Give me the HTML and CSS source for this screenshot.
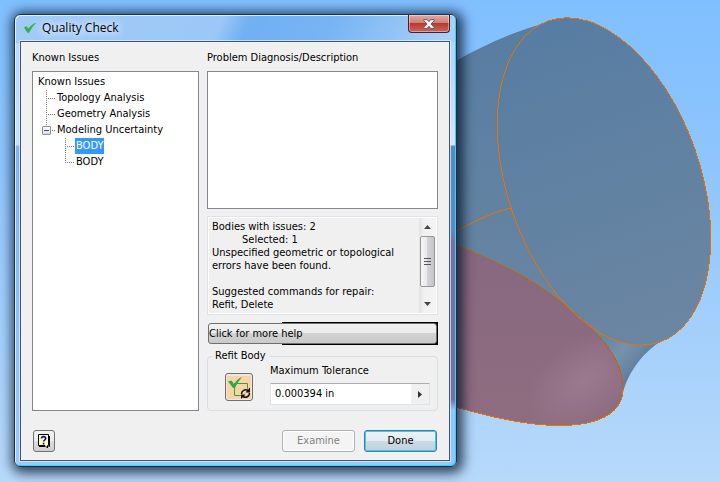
FILE: index.html
```html
<!DOCTYPE html>
<html lang="en">
<head>
	<meta charset="UTF-8">
	<title>Quality Check</title>
	<link rel="stylesheet" href="styles.css">
</head>
<body>
	<svg class="scene" viewBox="0 0 720 482" preserveAspectRatio="xMinYMin slice" aria-hidden="true">
		<defs>
			<linearGradient id="steel" gradientUnits="userSpaceOnUse" x1="0" y1="17" x2="0" y2="345">
				<stop offset="0" stop-color="#577da2"/>
				<stop offset="1" stop-color="#6b86a2"/>
			</linearGradient>
			<linearGradient id="neck" gradientUnits="userSpaceOnUse" x1="600" y1="345" x2="632" y2="372">
				<stop offset="0" stop-color="#6787a4"/>
				<stop offset="0.5" stop-color="#7592ad"/>
				<stop offset="1" stop-color="#647f9b"/>
			</linearGradient>
			<linearGradient id="plum" gradientUnits="userSpaceOnUse" x1="0" y1="245" x2="0" y2="425">
				<stop offset="0" stop-color="#876880"/>
				<stop offset="1" stop-color="#8f6d80"/>
			</linearGradient>
			<radialGradient id="shine" gradientUnits="userSpaceOnUse" cx="0" cy="0" r="66" gradientTransform="translate(585 380) rotate(-35) scale(1 .6)">
				<stop offset="0" stop-color="#9b7a90"/>
				<stop offset="1" stop-color="#9b7a90" stop-opacity="0"/>
			</radialGradient>
			<linearGradient id="ellipse-steel" gradientUnits="userSpaceOnUse" x1="434" y1="181" x2="774" y2="181">
				<stop offset="0" stop-color="#577da2"/>
				<stop offset="1" stop-color="#6b86a2"/>
			</linearGradient>
		</defs>
		<path fill="url(#steel)" d="M380 100 L456 61 C482 46 510 33 545 23 L604 180 L585 318 L560 310 L380 260 Z"/>
		<path fill="url(#neck)" d="M545 280 L600 330 L663 340 C644 351 628 372 623 393 L610 350 L560 308 Z"/>
		<ellipse fill="url(#ellipse-steel)" cx="604" cy="181.5" rx="170" ry="96.5" transform="rotate(70.9 604 181.5)"/>
		<path fill="url(#plum)" d="M380 220 L456 245 C503 264 536 281 566 306 C598 332 623 357 623 389 C623 411 602 425 562 425.5 C527 426 490 417 456 407 L380 390 Z"/>
		<path fill="url(#shine)" d="M380 220 L456 245 C503 264 536 281 566 306 C598 332 623 357 623 389 C623 411 602 425 562 425.5 C527 426 490 417 456 407 L380 390 Z"/>
		<g fill="none" stroke="#e67300" stroke-width="1" shape-rendering="crispEdges">
			<path d="M430 247 C458 229 486 214 511 208"/>
			<path stroke="#bd650e" d="M456 245 C503 264 536 281 566 306 C598 332 623 357 623 389"/>
			<path d="M623 389 C623 411 602 425 562 425.5 C527 426 490 417 456 407"/>
			<ellipse cx="604" cy="181.5" rx="170" ry="96.5" transform="rotate(70.9 604 181.5)"/>
		</g>
	</svg>

	<main class="dialog">
		<header class="titlebar">
			<svg class="title-icon" viewBox="0 0 12 10" aria-hidden="true"><path fill="#36ae49" stroke="#36ae49" stroke-width=".5" d="M.3 4.5 L2.5 3.5 L4.3 6 C6 3.5 8.5 1.2 11.7 .3 C9 2.5 7 5.5 5 9.6 L3.5 9.6 Z"/></svg>
			<h1 class="title">Quality Check</h1>
			<button class="close" aria-label="Close">
				<svg viewBox="0 0 12 10" aria-hidden="true"><path fill="#f5f5f5" stroke="#5c5c66" stroke-width="1" d="M.8 .6 H4.2 L6 2.7 L7.8 .6 H11.2 V1.6 L8 5 L11.2 8.4 V9.4 H7.8 L6 7.3 L4.2 9.4 H.8 V8.4 L4 5 L.8 1.6 Z"/></svg>
			</button>
		</header>
		<div class="client">
			<div class="columns">
				<section class="column">
					<h2 class="label">Known Issues</h2>
					<div class="box tree">
						<div class="row"><span class="node">Known Issues</span></div>
						<ul>
							<li><div class="row"><span class="node">Topology Analysis</span></div></li>
							<li><div class="row"><span class="node">Geometry Analysis</span></div></li>
							<li>
								<div class="row">
									<button class="toggle" aria-label="Collapse" aria-expanded="true"></button>
									<span class="node">Modeling Uncertainty</span>
								</div>
								<ul>
									<li><div class="row"><span class="node selected">BODY</span></div></li>
									<li><div class="row"><span class="node">BODY</span></div></li>
								</ul>
							</li>
						</ul>
					</div>
				</section>
				<section class="column">
					<h2 class="label">Problem Diagnosis/Description</h2>
					<div class="box diagnosis"></div>
					<div class="info">
						<div class="info-text">
							<p>Bodies with issues: 2</p>
							<p class="indent">Selected: 1</p>
							<p>Unspecified geometric or topological errors have been found.</p>
							<p class="suggest">Suggested commands for repair:</p>
							<p>Refit, Delete</p>
						</div>
						<div class="scrollbar">
							<button class="arrow" aria-label="Scroll up"><svg viewBox="0 0 7 4" aria-hidden="true"><path d="M0 4 L3.5 0 L7 4 Z"/></svg></button>
							<div class="thumb"><svg viewBox="0 0 7 8" aria-hidden="true"><path stroke="#555" d="M0 .5 H7 M0 3.5 H7 M0 6.5 H7"/></svg></div>
							<button class="arrow" aria-label="Scroll down"><svg viewBox="0 0 7 4" aria-hidden="true"><path d="M0 0 L3.5 4 L7 0 Z"/></svg></button>
						</div>
					</div>
					<div class="more">
						<button class="more-btn">Click for more help</button>
					</div>
					<fieldset class="refit">
						<legend>Refit Body</legend>
						<button class="refit-btn" aria-label="Refit">
							<svg viewBox="0 0 24 23" aria-hidden="true">
								<path fill="#ffd2a6" d="M0 0 H24 V23 H0 Z"/>
								<path fill="none" stroke="#22a844" d="M7.5 7.5 H20.5 V19.5 H7.5 Z"/>
								<path fill="#22b14c" d="M1 5.5 L4.5 4.5 L7 8 C9.5 4.5 12 2 15 1 C12 4.5 10 8 8 12 L6 12 Z"/>
								<circle cx="18.5" cy="17.5" r="5" fill="#ffd2a6"/>
								<path fill="none" stroke="#111" stroke-width="1.5" d="M14.5 18 C14.5 14.5 18 12.8 21 14.5 M22.5 17 C22.5 20.5 19 22.3 16 20.5"/>
								<path fill="#111" d="M23 11.5 V16.5 H18.5 Z M14 23 V18.5 H18.5 Z"/>
							</svg>
						</button>
						<div class="tolerance">
							<label for="tolerance">Maximum Tolerance</label>
							<div class="field">
								<input id="tolerance" type="text" value="0.000394 in">
								<button class="flyout" aria-label="More values"><svg viewBox="0 0 4 7" aria-hidden="true"><path d="M0 0 L4 3.5 L0 7 Z"/></svg></button>
							</div>
						</div>
					</fieldset>
				</section>
			</div>
			<footer class="actions">
				<button class="help-btn" aria-label="Help">
					<svg viewBox="0 0 14 15" aria-hidden="true">
						<path fill="#fffcc4" stroke="#000" d="M1.5 .5 H11.5 V11.5 H10.5 V14 L8 11.5 H1.5 Z"/>
						<path fill="none" stroke="#000" d="M12.5 2 V12.5 H11.5 M8 12.5 H2"/>
						<path fill="none" stroke="#11118a" stroke-width="1.6" d="M4.5 4.4 C4.5 2 8.7 2 8.7 4.4 C8.7 5.8 6.6 5.8 6.6 7.6 M6.6 8.8 V10.4"/>
					</svg>
				</button>
				<button class="btn" disabled>Examine</button>
				<button class="btn default">Done</button>
			</footer>
		</div>
	</main>
</body>
</html>
```

FILE: styles.css
```css
*{
	box-sizing: border-box;
}
body{
	margin: 0;
	padding: 14px;
	min-height: 100vh;
	background: linear-gradient(#80bfff, #8fc5fd 35%, #b7d9fa);
	font: 11px/14px "DejaVu Sans Condensed", "DejaVu Sans", sans-serif;
	color: #000;
}
h1, h2, p, ul{
	margin: 0;
	padding: 0;
	font-size: inherit;
	font-weight: normal;
}
ul{
	list-style: none;
}
button, input{
	font: inherit;
	color: inherit;
	margin: 0;
	padding: 0;
}
svg{
	display: block;
}
.scene{
	position: absolute;
	left: 0;
	top: 0;
	width: 100%;
	height: 100%;
}
/* glass window frame */
.dialog{
	position: relative;
	max-width: 443px;
	padding: 0 6px 5px 5px;
	border: 1px solid #17324d;
	border-radius: 6px;
	background:
		linear-gradient(115deg, rgba(255,255,255,.35) 0, rgba(255,255,255,.3) 190px, rgba(255,255,255,0) 215px, rgba(255,255,255,.05) 290px, rgba(255,255,255,.4) 400px) 0 0 / 100% 27px no-repeat,
		linear-gradient(#b4d6fb 20px, #dbe4f2 103px, #5888bd 104px, #5b8bc0 188px, #77729f 200px, #77729f 358px, #92c6fb 368px) 100% 27px / 7px 100% no-repeat,
		linear-gradient(#70b0f3 27px, #b9dafb 28px, #c5e0fb 130px, #7cb6f3 131px, #9bcafa);
	box-shadow: inset 1px 1px 0 rgba(255,255,255,.7), inset -1px -1px 0 #35d0ff, 2px 2px 12px 4px rgba(0,15,35,.75);
}
.titlebar{
	display: flex;
	align-items: center;
	height: 26px;
	padding-left: 4px;
}
.title-icon{
	width: 12px;
	height: 10px;
}
.title{
	flex: 1;
	margin-left: 6px;
	font: 12px/16px "Open Sans", sans-serif;
	text-shadow: 0 0 8px #fff, 0 0 8px #fff;
}
.close{
	align-self: flex-start;
	display: flex;
	align-items: center;
	justify-content: center;
	width: 42px;
	height: 18px;
	border: 1px solid #531c22;
	border-top: 0;
	border-radius: 0 0 4px 4px;
	background: linear-gradient(#e0aaa4, #cf8076 45%, #b93a2c 50%, #c4685f);
	box-shadow: inset 0 0 0 1px rgba(255,255,255,.4);
}
.close svg{
	width: 12px;
	height: 10px;
}
.client{
	padding: 9px 11px 8px;
	border: 1px solid #43566f;
	background: #f0f0f0;
	box-shadow: 0 0 0 1px rgba(225,240,255,.7);
}
.columns{
	display: grid;
	grid-template-columns: 167fr 231fr;
	gap: 8px;
}
.column{
	display: flex;
	flex-direction: column;
	min-width: 0;
}
.label{
	margin-bottom: 6px;
}
.box{
	border: 1px solid #828790;
	background: #fff;
}
.tree{
	flex: 1;
	padding: 2px 4px;
	line-height: 16px;
}
.tree ul{
	margin-left: 9px;
}
.tree li{
	padding-left: 10px;
	background:
		repeating-linear-gradient(#808080 0 1px, transparent 1px 2px) 0 0 / 1px 100% no-repeat,
		repeating-linear-gradient(90deg, #808080 0 1px, transparent 1px 2px) 0 8px / 9px 1px no-repeat;
}
.tree li:last-child{
	background-size: 1px 9px, 9px 1px;
}
.row{
	display: flex;
	align-items: center;
	height: 16px;
}
.node{
	padding: 0 1px;
	white-space: nowrap;
}
.selected{
	background: #39f;
	color: #fff;
}
.toggle{
	width: 9px;
	height: 9px;
	margin: 0 5px 0 -14px;
	border: 1px solid #919191;
	border-radius: 1px;
	background:
		linear-gradient(#3b4f9a, #3b4f9a) center / 5px 1px no-repeat,
		linear-gradient(#fff, #ddd);
}
.diagnosis{
	height: 138px;
}
.info{
	display: flex;
	height: 99px;
	margin-top: 7px;
	border: 1px solid #dfe3e9;
	line-height: 13px;
	box-shadow: inset 1px 1px 0 #fff, inset -1px -1px 0 #fff;
}
.info-text{
	flex: 1;
	padding: 3px 4px;
}
.indent{
	padding-left: 30px;
}
.suggest{
	margin-top: 13px;
}
.scrollbar{
	display: flex;
	flex-direction: column;
	width: 17px;
	margin: 1px 1px 1px 0;
	background: linear-gradient(90deg, #e3e3e3, #f1f1f1 30%, #f4f4f4);
}
.arrow{
	display: flex;
	align-items: center;
	justify-content: center;
	height: 18px;
	border: 0;
	background: none;
	fill: #444;
}
.arrow:last-child{
	margin-top: auto;
}
.arrow svg{
	width: 7px;
	height: 4px;
}
.thumb{
	display: flex;
	align-items: center;
	justify-content: center;
	height: 51px;
	margin: 0 1px;
	border: 1px solid #979797;
	border-radius: 2px;
	background: linear-gradient(90deg, #f5f5f5, #e9e9eb 50%, #d4d4d8 50%, #c3c3c9);
}
.thumb svg{
	width: 7px;
	height: 8px;
}
.more{
	margin-top: 7px;
	padding: 1px;
	background: linear-gradient(90deg, transparent 75px, #000 75px);
}
.more-btn{
	display: block;
	width: 100%;
	height: 21px;
	border: 1px solid #707070;
	border-radius: 3px;
	background: linear-gradient(#f2f2f2, #ebebeb 50%, #d2d2d2 50%, #cacaca);
	text-align: left;
}
.refit{
	display: flex;
	gap: 17px;
	min-width: 0;
	height: 62px;
	margin: 4px 0 0;
	padding: 0 7px 0 17px;
	border: 1px solid #d5dfe5;
	border-radius: 4px;
}
.refit legend{
	margin-left: -12px;
	padding: 0 3px 0 2px;
}
.refit-btn{
	width: 28px;
	height: 28px;
	margin-top: 10px;
	padding: 1px;
	border: 1px solid #707070;
	border-radius: 3px;
	background: #e8e8e8;
}
.refit-btn svg{
	width: 24px;
	height: 23px;
}
.tolerance{
	flex: 1;
	min-width: 0;
}
.tolerance label{
	display: block;
	margin: 1px 0 5px;
}
.field{
	display: flex;
	height: 22px;
	border: 1px solid #e2e3ea;
	border-top-color: #abadb3;
	background: #fff;
}
.field input{
	flex: 1;
	min-width: 0;
	padding: 0 4px;
	border: 0;
	background: none;
}
.flyout{
	display: flex;
	align-items: center;
	justify-content: center;
	width: 18px;
	border: 0;
	background: #f0f0f0;
	fill: #333;
}
.flyout svg{
	width: 4px;
	height: 7px;
}
.actions{
	display: flex;
	gap: 9px;
	margin-top: 19px;
	padding-right: 1px;
}
.btn{
	width: 73px;
	height: 22px;
	border: 1px solid #707070;
	border-radius: 3px;
	background: linear-gradient(#f2f2f2, #ebebeb 50%, #ddd 50%, #cfcfcf);
	box-shadow: inset 0 0 0 1px rgba(255,255,255,.8);
}
.btn:disabled{
	border-color: #adb2b5;
	background: #f4f4f4;
	color: #838383;
}
.default{
	border-color: #3c7fb1;
	background: linear-gradient(#eef3f6, #e3ebf0 50%, #cbdbe4 50%, #bfd2dc);
	box-shadow: inset 0 0 0 1px #40c8f4;
}
.help-btn{
	display: flex;
	align-items: center;
	justify-content: center;
	width: 22px;
	height: 22px;
	margin: 0 auto 0 1px;
	border: 1px solid #707070;
	border-radius: 3px;
	background: linear-gradient(#f2f2f2, #ebebeb 50%, #ddd 50%, #cfcfcf);
}
.help-btn svg{
	width: 14px;
	height: 15px;
}
```
